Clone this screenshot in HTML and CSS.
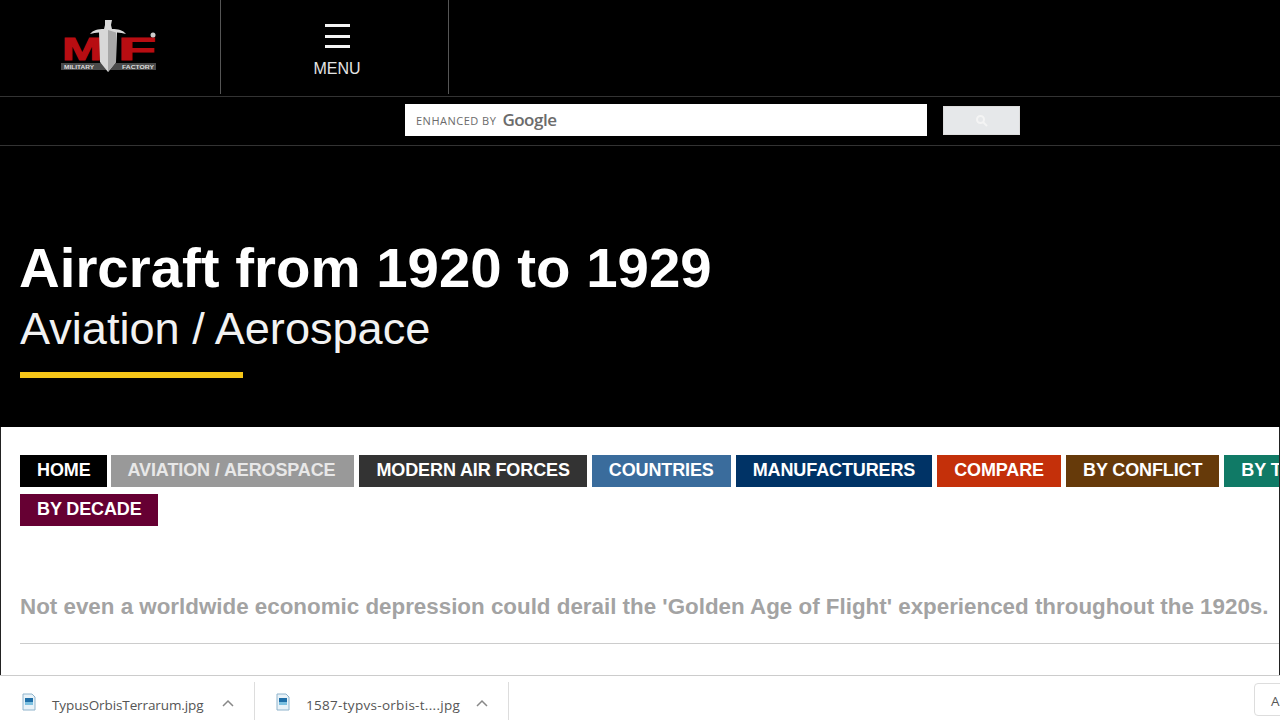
FILE: index.html
```html
<!DOCTYPE html>
<html lang="en">
<head>
    <meta charset="UTF-8">
    <meta name="viewport" content="width=device-width, initial-scale=1.0">
    <title>Aircraft from 1920 to 1929</title>
    <link rel="stylesheet" href="styles.css">
</head>
<body>
    <header class="site-header">
        <div class="top-bar">
            <div class="logo-cell">
                <svg class="logo" width="100" height="56" viewBox="0 0 100 56">
                    <text class="logo-letters" x="3" y="41" textLength="40" lengthAdjust="spacingAndGlyphs">M</text>
                    <text class="logo-letters" x="59" y="41" textLength="38" lengthAdjust="spacingAndGlyphs">F</text>
                    <rect x="2" y="44" width="95" height="7" fill="#4a4a4a"/>
                    <text class="logo-small" x="5" y="50" textLength="30" lengthAdjust="spacingAndGlyphs">MILITARY</text>
                    <text class="logo-small" x="63" y="50" textLength="32" lengthAdjust="spacingAndGlyphs">FACTORY</text>
                    <path d="M46 1h7l-1 5 1 4c6 0 11 1 14 5-3-1-6-1.500-9-1.500L57 43l-8 10-8-10-1-29.500c-3 0-6 .5-9 1.500 3-4 8-5 14-5l1-4z" fill="#d8d8d8"/>
                    <path d="M49 11l8 2.500L57 43l-8 10z" fill="#a8a8a8"/>
                    <circle cx="94" cy="16" r="2.500" fill="#ccc"/>
                </svg>
            </div>
            <div class="menu-cell">
                <div class="burger"><span></span><span></span><span></span></div>
                <div class="menu-label">MENU</div>
            </div>
        </div>
        <div class="search-bar">
            <div class="search-input">
                <span class="enhanced">ENHANCED BY</span>
                <span class="google">Google</span>
            </div>
            <div class="search-btn">
                <svg width="13" height="13" viewBox="0 0 13 13" fill="none" stroke="#f4f4f4" stroke-width="2">
                    <circle cx="5.500" cy="5.500" r="3.500"/>
                    <path d="M8 8l4 4"/>
                </svg>
            </div>
        </div>
        <div class="hero">
            <h1>Aircraft from 1920 to 1929</h1>
            <h2>Aviation / Aerospace</h2>
            <div class="yellow-bar"></div>
        </div>
    </header>

    <main class="content">
        <nav class="nav-row">
            <a class="nav-home">HOME</a>
            <a class="nav-aviation">AVIATION / AEROSPACE</a>
            <a class="nav-airforces">MODERN AIR FORCES</a>
            <a class="nav-countries">COUNTRIES</a>
            <a class="nav-manufacturers">MANUFACTURERS</a>
            <a class="nav-compare">COMPARE</a>
            <a class="nav-conflict">BY CONFLICT</a>
            <a class="nav-type">BY TYPE</a>
        </nav>
        <nav class="nav-row">
            <a class="nav-decade">BY DECADE</a>
        </nav>
        <p class="intro">Not even a worldwide economic depression could derail the 'Golden Age of Flight' experienced throughout the 1920s.</p>
        <hr class="divider">
    </main>

    <footer class="download-bar">
        <div class="download-item first">
            <svg class="file-icon" width="14" height="18" viewBox="0 0 14 18">
                <path d="M1 1h9l3 3v13H1z" fill="#e8f2f8" stroke="#8fb4cc"/>
                <rect x="3" y="5" width="8" height="7" fill="#1f6fa8"/>
                <rect x="3" y="9" width="8" height="3" fill="#7cc0e0"/>
            </svg>
            <span class="file-name">TypusOrbisTerrarum.jpg</span>
            <svg class="chevron" width="12" height="8" viewBox="0 0 12 8" fill="none" stroke="#888" stroke-width="1.500"><path d="M1 7l5-5 5 5"/></svg>
        </div>
        <div class="download-item second">
            <svg class="file-icon" width="14" height="18" viewBox="0 0 14 18">
                <path d="M1 1h9l3 3v13H1z" fill="#e8f2f8" stroke="#8fb4cc"/>
                <rect x="3" y="5" width="8" height="7" fill="#1f6fa8"/>
                <rect x="3" y="9" width="8" height="3" fill="#7cc0e0"/>
            </svg>
            <span class="file-name wide">1587-typvs-orbis-t....jpg</span>
            <svg class="chevron" width="12" height="8" viewBox="0 0 12 8" fill="none" stroke="#888" stroke-width="1.500"><path d="M1 7l5-5 5 5"/></svg>
        </div>
        <div class="show-all">All</div>
    </footer>
</body>
</html>
```

FILE: styles.css
```css
html, body {
    margin: 0;
    padding: 0;
}
body {
    width: 1280px;
    height: 720px;
    overflow: hidden;
    display: flex;
    flex-direction: column;
    font-family: "Liberation Sans", Arial, sans-serif;
    background-color: #fff;
}
.site-header {
    background-color: #000;
    color: #fff;
    height: 427px;
    flex: none;
}
.top-bar {
    display: flex;
    height: 96px;
    border-bottom: 1px solid #333;
}
.logo-cell {
    width: 220px;
    height: 94px;
    border-right: 1px solid #555;
    display: flex;
    justify-content: center;
}
.logo {
    margin-top: 19px;
    margin-left: -2px;
}
.logo-letters {
    font-family: "Liberation Sans", Arial, sans-serif;
    font-weight: bold;
    font-size: 31px;
    fill: #b80d12;
    stroke: #b80d12;
    stroke-width: 1px;
}
.logo-small {
    font-family: "Liberation Sans", Arial, sans-serif;
    font-weight: bold;
    font-size: 4.500px;
    fill: #ddd;
}
.menu-cell {
    width: 228px;
    height: 94px;
    border-right: 1px solid #555;
    display: flex;
    flex-direction: column;
    align-items: center;
    padding-left: 5px;
    box-sizing: border-box;
}
.burger {
    margin-top: 24px;
    width: 25px;
    height: 24px;
    display: flex;
    flex-direction: column;
    justify-content: space-between;
}
.burger span {
    display: block;
    height: 3px;
    background-color: #f4f4f4;
}
.menu-label {
    margin-top: 12px;
    font-size: 16px;
    line-height: 18px;
    color: #e4e4e4;
}
.search-bar {
    height: 48px;
    border-bottom: 1px solid #333;
    display: flex;
    align-items: flex-start;
    padding-left: 405px;
}
.search-input {
    margin-top: 7px;
    width: 522px;
    height: 32px;
    background-color: #fff;
    display: flex;
    align-items: center;
    padding-left: 11px;
    box-sizing: border-box;
    color: #6b6b6b;
}
.enhanced {
    font-family: "Open Sans", sans-serif;
    font-size: 11px;
    letter-spacing: 0.500px;
    margin-right: 6px;
}
.google {
    font-family: "Open Sans", sans-serif;
    font-size: 17px;
    font-weight: 600;
    letter-spacing: -0.500px;
    margin-top: -2px;
}
.search-btn {
    margin-top: 9px;
    margin-left: 16px;
    width: 77px;
    height: 29px;
    background-color: #e6e8ea;
    border: 1px solid #ddd;
    box-sizing: border-box;
    display: flex;
    align-items: center;
    justify-content: center;
}
.hero {
    padding: 92px 20px 0 19px;
}
.hero h1 {
    margin: 0;
    font-size: 56.400px;
    line-height: 60px;
    font-weight: bold;
}
.hero h2 {
    margin: 2px 0 0 1px;
    font-size: 45.100px;
    line-height: 58px;
    font-weight: normal;
    color: #f2f2f2;
}
.yellow-bar {
    margin-top: 14px;
    margin-left: 1px;
    width: 223px;
    height: 6px;
    background-color: #f5c518;
}
.content {
    flex: 1;
    padding: 28px 0 0 19px;
    border-left: 1px solid #222;
    border-right: 1px solid #222;
    min-height: 0;
    overflow: hidden;
}
.nav-row {
    display: flex;
    gap: 5px;
    margin-bottom: 7px;
    white-space: nowrap;
}
.nav-row a {
    display: block;
    flex: none;
    height: 32px;
    line-height: 31px;
    padding: 0 17px;
    color: #fff;
    font-size: 18px;
    font-weight: bold;
    letter-spacing: -0.120px;
}
.nav-row .nav-home { background-color: #000; padding-right: 16px; }
.nav-row .nav-aviation { background-color: #999; color: #e8e8e8; margin-left: -1px; padding-right: 19px; }
.nav-airforces { background-color: #333; }
.nav-countries { background-color: #3a6c9c; }
.nav-manufacturers { background-color: #003366; }
.nav-compare { background-color: #c4300a; }
.nav-conflict { background-color: #663a0a; }
.nav-type { background-color: #107a66; }
.nav-row .nav-decade { background-color: #660033; padding-right: 16px; }
.intro {
    margin: 68px 0 0;
    font-size: 22.360px;
    line-height: 26px;
    font-weight: bold;
    color: #a3a3a3;
    white-space: nowrap;
}
.divider {
    margin: 23px 0 0;
    border: none;
    border-top: 1px solid #ccc;
}
.download-bar {
    height: 44px;
    flex: none;
    display: flex;
    align-items: center;
    border-top: 1px solid #ccc;
    background-color: #fff;
    position: relative;
    font-family: "Open Sans", sans-serif;
    font-size: 13.500px;
    color: #555;
}
.download-item {
    height: 38px;
    display: flex;
    align-items: center;
    border-right: 1px solid #ddd;
    box-sizing: border-box;
    padding: 8px 0 0 22px;
    margin-top: 6px;
}
.download-item.first { width: 255px; }
.download-item.second { width: 254px; padding-left: 21px; }
.file-icon {
    margin-right: 16px;
    margin-top: -6px;
}
.file-name {
    width: 170px;
    white-space: nowrap;
    letter-spacing: -0.100px;
}
.file-name.wide {
    letter-spacing: 0.300px;
}
.chevron {
    margin-top: -4px;
}
.show-all {
    position: absolute;
    left: 1254px;
    top: 7px;
    width: 60px;
    height: 33px;
    border: 1px solid #ddd;
    border-radius: 4px;
    box-sizing: border-box;
    padding-left: 16px;
    line-height: 35px;
}
```
